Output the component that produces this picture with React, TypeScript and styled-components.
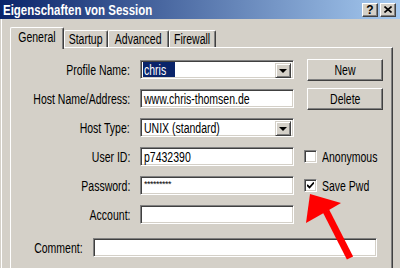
import React from 'react'
import styled, { createGlobalStyle } from 'styled-components'

const GlobalStyle = createGlobalStyle`
    html, body {
        margin: 0;
        padding: 0;
        background: #d4d0c8;
        overflow: hidden;
    }
    body {
        font-family: 'Liberation Sans', Arial, sans-serif;
        font-size: 14px;
        color: #000;
    }
`

// the dialog font is a narrow face: condense the regular one
const Text = styled.span<{ $origin?: 'left' | 'right' | 'center'; $scale?: number }>`
    display: inline-block;
    white-space: nowrap;
    transform: scaleX(${p => p.$scale ?? 0.75});
    transform-origin: ${p => p.$origin ?? 'left'} center;
`

const Window = styled.div`
    position: relative;
    width: 400px;
    height: 268px;
    background: #d4d0c8;
    overflow: hidden;
`

const TitleBar = styled.div`
    height: 19px;
    display: flex;
    align-items: center;
    justify-content: space-between;
    padding: 0 4px 0 3px;
    background: linear-gradient(to right, #0a246a, #a6caf0);
`

const Title = styled(Text)`
    color: #fff;
    font-weight: bold;
    font-size: 14px;
`

const TitleButtons = styled.div`
    display: flex;
    gap: 2px;
`

const CaptionButton = styled.div`
    width: 16px;
    height: 14px;
    box-sizing: border-box;
    background: #d4d0c8;
    border: 1px solid;
    border-color: #fff #404040 #404040 #fff;
    box-shadow: inset -1px -1px #808080;
    display: flex;
    align-items: center;
    justify-content: center;
    font-weight: bold;
    font-size: 12px;
    line-height: 1;
`

const Body = styled.div`
    padding: 8px 0 0 8px;
    border-left: 1px solid #fff;
    margin-left: 1px;
`

const TabStrip = styled.div`
    display: flex;
    align-items: flex-end;
    height: 20px;
    padding-left: 1px;
`

const Tab = styled.div<{ $active?: boolean; $width: number }>`
    position: relative;
    z-index: ${p => (p.$active ? 2 : 1)};
    box-sizing: border-box;
    width: ${p => p.$width}px;
    height: ${p => (p.$active ? 22 : 17)}px;
    margin-bottom: ${p => (p.$active ? -2 : 0)}px;
    margin-left: ${p => (p.$active ? -1 : 0)}px;
    padding-top: ${p => (p.$active ? 1 : 0)}px;
    display: flex;
    justify-content: center;
    align-items: ${p => (p.$active ? 'flex-start' : 'center')};
    background: #d4d0c8;
    border-top: 1px solid #fff;
    border-left: 1px solid #fff;
    border-right: 1px solid #404040;
    box-shadow: inset -1px 0 #808080;
    border-radius: 2px 2px 0 0;
    line-height: 16px;
`

const Panel = styled.div`
    position: relative;
    z-index: 1;
    width: 383px;
    height: 240px;
    box-sizing: border-box;
    border-top: 1px solid #fff;
    border-left: 1px solid #fff;
    border-right: 1px solid #404040;
    box-shadow: inset -1px 0 #808080;
    padding-top: 7px;
`

const FormGrid = styled.div`
    display: grid;
    grid-template-columns: 119px 154px 1fr;
    grid-auto-rows: 29px;
    column-gap: 10px;
    align-items: center;
`

const Label = styled.label`
    display: flex;
    justify-content: flex-end;
`

const Field = styled.div`
    position: relative;
    box-sizing: border-box;
    height: 19px;
    width: 100%;
    background: #fff;
    border: 1px solid;
    border-color: #808080 #fff #fff #808080;
    box-shadow: inset 1px 1px #404040, inset -1px -1px #d4d0c8;
    padding: 0 3px;
    display: flex;
    align-items: center;
    overflow: hidden;
`

const Selected = styled.span`
    background: #0a246a;
    color: #fff;
    margin-left: -1px;
    padding: 0 1px;
    height: 15px;
    display: flex;
    align-items: center;
`

const Masked = styled.span`
    font-size: 9px;
    letter-spacing: -0.5px;
    margin-top: -3px;
`

const DropButton = styled.div`
    position: absolute;
    right: 2px;
    top: 2px;
    width: 16px;
    height: 15px;
    box-sizing: border-box;
    background: #d4d0c8;
    border: 1px solid;
    border-color: #d4d0c8 #404040 #404040 #d4d0c8;
    box-shadow: inset 1px 1px #fff, inset -1px -1px #808080;
    display: flex;
    align-items: center;
    justify-content: center;
`

const Arrow = styled.div`
    width: 0;
    height: 0;
    border-left: 4px solid transparent;
    border-right: 4px solid transparent;
    border-top: 4px solid #000;
`

const Extra = styled.div`
    display: flex;
    align-items: center;
    gap: 5px;
`

const Button = styled.div`
    margin-left: 3px;
    width: 76px;
    height: 22px;
    box-sizing: border-box;
    background: #d4d0c8;
    border: 1px solid;
    border-color: #fff #404040 #404040 #fff;
    box-shadow: inset -1px -1px #808080;
    display: flex;
    align-items: center;
    justify-content: center;
`

const CheckBox = styled.div`
    width: 13px;
    height: 13px;
    box-sizing: border-box;
    background: #fff;
    border: 1px solid;
    border-color: #808080 #fff #fff #808080;
    box-shadow: inset 1px 1px #404040, inset -1px -1px #d4d0c8;
    display: flex;
    align-items: center;
    justify-content: center;
`

const CommentRow = styled.div`
    margin-top: 4px;
    display: grid;
    grid-template-columns: 72px 284px;
    height: 29px;
    column-gap: 10px;
    align-items: center;
`

const Overlay = styled.svg`
    position: absolute;
    left: 0;
    top: 0;
    z-index: 5;
    pointer-events: none;
`

const Combo = ({ children }: { children?: React.ReactNode }) => (
    <Field>
        {children}
        <DropButton>
            <Arrow />
        </DropButton>
    </Field>
)

const tabs = [
    { label: 'General', width: 54, active: true },
    { label: 'Startup', width: 44 },
    { label: 'Advanced', width: 61 },
    { label: 'Firewall', width: 47 },
]

const App = () => {
    return (
        <>
            <GlobalStyle />
            <Window>
                <TitleBar>
                    <Title $scale={0.82}>Eigenschaften von Session</Title>
                    <TitleButtons>
                        <CaptionButton>?</CaptionButton>
                        <CaptionButton>
                            <svg width='8' height='7' viewBox='0 0 8 7'>
                                <path d='M0.5 0.5 L7.5 6.5 M7.5 0.5 L0.5 6.5' stroke='#000' strokeWidth='1.6' />
                            </svg>
                        </CaptionButton>
                    </TitleButtons>
                </TitleBar>
                <Body>
                    <TabStrip>
                        {tabs.map(tab => (
                            <Tab key={tab.label} $active={tab.active} $width={tab.width}>
                                <Text $origin='center'>{tab.label}</Text>
                            </Tab>
                        ))}
                    </TabStrip>
                    <Panel>
                        <FormGrid>
                            <Label>
                                <Text $origin='right'>Profile Name:</Text>
                            </Label>
                            <Combo>
                                <Selected>
                                    <Text>chris</Text>
                                </Selected>
                            </Combo>
                            <Extra>
                                <Button>
                                    <Text $origin='center'>New</Text>
                                </Button>
                            </Extra>

                            <Label>
                                <Text $origin='right'>Host Name/Address:</Text>
                            </Label>
                            <Field>
                                <Text>www.chris-thomsen.de</Text>
                            </Field>
                            <Extra>
                                <Button>
                                    <Text $origin='center'>Delete</Text>
                                </Button>
                            </Extra>

                            <Label>
                                <Text $origin='right'>Host Type:</Text>
                            </Label>
                            <Combo>
                                <Text>UNIX (standard)</Text>
                            </Combo>
                            <div />

                            <Label>
                                <Text $origin='right'>User ID:</Text>
                            </Label>
                            <Field>
                                <Text>p7432390</Text>
                            </Field>
                            <Extra>
                                <CheckBox />
                                <Text>Anonymous</Text>
                            </Extra>

                            <Label>
                                <Text $origin='right'>Password:</Text>
                            </Label>
                            <Field>
                                <Masked>*********</Masked>
                            </Field>
                            <Extra>
                                <CheckBox>
                                    <svg width='7' height='7' viewBox='0 0 7 7'>
                                        <path d='M0 3 L2.5 5.5 L7 0.5' stroke='#000' strokeWidth='1.8' fill='none' />
                                    </svg>
                                </CheckBox>
                                <Text>Save Pwd</Text>
                            </Extra>

                            <Label>
                                <Text $origin='right'>Account:</Text>
                            </Label>
                            <Field />
                            <div />
                        </FormGrid>
                        <CommentRow>
                            <Label>
                                <Text $origin='right'>Comment:</Text>
                            </Label>
                            <Field />
                        </CommentRow>
                    </Panel>
                </Body>
                <Overlay width='400' height='268' viewBox='0 0 400 268'>
                    <line x1='326' y1='211' x2='350' y2='258' stroke='#ff0000' strokeWidth='7' />
                    <polygon points='310,194 341,203 329,210 306,223' fill='#ff0000' />
                </Overlay>
            </Window>
        </>
    )
}

export default App
